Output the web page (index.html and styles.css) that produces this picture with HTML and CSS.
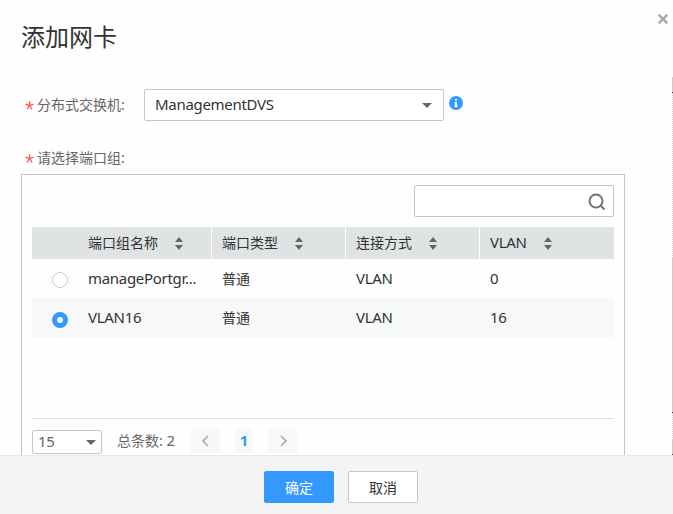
FILE: index.html
```html
<!DOCTYPE html>
<html lang="zh-CN">
<head>
<meta charset="utf-8">
<title>添加网卡</title>
<link rel="stylesheet" href="styles.css">
</head>
<body>
<div class="dialog">
  <main class="content">
    <header class="head">
      <h1>添加网卡</h1>
      <svg class="close" width="10" height="10" viewBox="0 0 10 10"><path d="M.6 .6L9.4 9.4M9.4 .6L.6 9.4"/></svg>
    </header>
    <div class="field">
      <span class="star"><svg width="9" height="9" viewBox="0 0 9 9"><path d="M4.5 0.2V4.7M0.4 3.2L4.5 4.7L8.6 3.2M2 8.4L4.5 4.7L7 8.4"/></svg></span>
      <label>分布式交换机:</label>
      <div class="select"><span class="latin">ManagementDVS</span><svg width="10" height="5" viewBox="0 0 10 5"><path d="M0 0H10L5 5Z"/></svg></div>
      <svg class="info" width="14" height="14" viewBox="0 0 14 14"><circle cx="7" cy="7" r="7"/><path d="M6 3h2v1.6H6zM5.4 6H8v4h.8v1H5.3v-1H6V7h-.6z"/></svg>
    </div>
    <div class="field group">
      <span class="star"><svg width="9" height="9" viewBox="0 0 9 9"><path d="M4.5 0.2V4.7M0.4 3.2L4.5 4.7L8.6 3.2M2 8.4L4.5 4.7L7 8.4"/></svg></span>
      <label>请选择端口组:</label>
    </div>
    <section class="panel">
      <div class="search"><svg width="18" height="18" viewBox="0 0 18 18"><circle cx="8" cy="8" r="6.5"/><path d="M12.5 12.5L16.5 16.5"/></svg></div>
      <div class="grid">
        <div class="row header">
          <div class="cell name">端口组名称<svg class="sort" width="8" height="13" viewBox="0 0 8 13"><path d="M0 5H8L4 0ZM0 8H8L4 13Z"/></svg></div>
          <div class="cell">端口类型<svg class="sort" width="8" height="13" viewBox="0 0 8 13"><path d="M0 5H8L4 0ZM0 8H8L4 13Z"/></svg></div>
          <div class="cell">连接方式<svg class="sort" width="8" height="13" viewBox="0 0 8 13"><path d="M0 5H8L4 0ZM0 8H8L4 13Z"/></svg></div>
          <div class="cell"><span class="latin">VLAN</span><svg class="sort" width="8" height="13" viewBox="0 0 8 13"><path d="M0 5H8L4 0ZM0 8H8L4 13Z"/></svg></div>
        </div>
        <div class="row">
          <div class="cell name"><span class="radio"></span><span class="latin">managePortgr...</span></div>
          <div class="cell">普通</div>
          <div class="cell"><span class="latin">VLAN</span></div>
          <div class="cell"><span class="latin">0</span></div>
        </div>
        <div class="row alt">
          <div class="cell name"><span class="radio on"></span><span class="latin">VLAN16</span></div>
          <div class="cell">普通</div>
          <div class="cell"><span class="latin">VLAN</span></div>
          <div class="cell"><span class="latin">16</span></div>
        </div>
      </div>
      <div class="pager">
        <div class="size"><span class="latin">15</span><svg width="10" height="5" viewBox="0 0 10 5"><path d="M0 0H10L5 5Z"/></svg></div>
        <span class="total">总条数: <span class="count">2</span></span>
        <span class="step"><svg width="7" height="12" viewBox="0 0 7 12"><path d="M6 1L1 6L6 11"/></svg></span>
        <span class="page">1</span>
        <span class="step"><svg width="7" height="12" viewBox="0 0 7 12"><path d="M1 1L6 6L1 11"/></svg></span>
      </div>
    </section>
    <div class="edge"><i class="solid first"></i><i class="dots upper"></i><i class="solid middle"></i><i class="dots lower"></i><i class="solid last"></i></div>
  </main>
  <footer class="footer">
    <button class="primary">确定</button>
    <button>取消</button>
  </footer>
</div>
</body>
</html>
```
FILE: styles.css
```css
* { box-sizing: border-box; }
body {
  margin: 0;
  font: 14px/20px "Noto Sans", "Noto Sans CJK SC", sans-serif;
  color: #333;
  background: #fefefe;
}
svg { display: block; flex: none; fill: #666; }
.dialog { width: 673px; height: 514px; overflow: hidden; display: flex; flex-direction: column; }
.content { position: relative; height: 455px; overflow: hidden; flex: none; padding-left: 21px; }
.head { height: 89px; display: flex; justify-content: space-between; padding: 14px 5px 0 0; }
h1 { margin: 6px 0 0; font-size: 24px; line-height: 34px; font-weight: 400; }
.close { fill: none; stroke: #aaa; stroke-width: 2.5; }
.field { display: flex; align-items: center; height: 32px; color: #666; }
.star { width: 16px; padding: 0 0 0 3.5px; }
.star svg { fill: none; stroke: #f66060; stroke-width: 1.4; }
.field label { width: 107px; white-space: nowrap; }
.latin { font-size: 15px; letter-spacing: -0.3px; padding-bottom: 2px; }
.count { font-size: 15px; }
.select {
  width: 300px; height: 32px; border: 1px solid #c6c6c6; border-radius: 2px;
  display: flex; align-items: center; justify-content: space-between;
  padding: 0 11px 0 10px; color: #333; background: #fff;
}
.info { margin: -4px 0 0 5px; fill: #39f; }
.info path { fill: #fff; }
.group { height: 20px; margin-top: 27px; }
.panel { width: 604px; height: 300px; margin-top: 6px; border: 1px solid #c6c6c6; padding: 10px; }
.search {
  width: 200px; height: 32px; margin: 0 0 10px auto; border: 1px solid #c6c6c6; border-radius: 2px;
  display: flex; align-items: center; justify-content: flex-end; padding: 1px 7px 0 0; background: #fff;
}
.search svg { fill: none; stroke: #737373; stroke-width: 2; }
.grid { height: 192px; border-bottom: 1px solid #dfdfdf; }
.row { display: grid; grid-template-columns: 180px 134px 134px 134px; height: 39px; }
.header { height: 32px; }
.alt { height: 40px; background: #f7f9f8; }
.cell { display: flex; align-items: center; padding-left: 10px; white-space: nowrap; }
.header .cell { background: #dfe3e3; border-right: 1px solid #fff; }
.header .cell:last-child { border-right: 0; }
.name { padding-left: 20px; }
.header .name { padding-left: 56px; }
.sort { margin-left: 17px; }
.radio { width: 16px; height: 16px; margin: 3px 20px 0 0; border: 1px solid #ccc; border-radius: 50%; background: #fff; }
.radio.on { border: 5px solid #39f; margin-top: 4px; }
.pager { display: flex; align-items: flex-start; padding-top: 10px; color: #666; }
.size {
  width: 70px; height: 24px; margin: 1px 15px 0 0; border: 1px solid #c6c6c6; border-radius: 2px;
  display: flex; align-items: center; justify-content: space-between; padding: 0 5px; background: #fff;
}
.total { width: 73px; line-height: 22px; white-space: nowrap; }
.step { width: 30px; height: 24px; display: flex; align-items: center; justify-content: center; background: #f7f9f8; }
.step svg { fill: none; stroke: #aaa; stroke-width: 1.6; }
.page { width: 18px; height: 24px; margin: 0 15px; font-size: 15px; line-height: 22px; text-align: center; font-weight: 700; color: #39f; background: #f7f9f8; }
.footer {
  height: 59px; display: flex; justify-content: center; align-items: flex-start; gap: 14px;
  padding: 15px 0 0 9px; border-top: 1px solid #e9e9e9; background: #f4f4f4;
}
button { width: 70px; height: 32px; padding: 2px 0 0; border: 1px solid #c6c6c6; border-radius: 2px; background: #fff; color: #333; font: inherit; }
.primary { border-color: #39f; background: #39f; color: #fff; }
.edge { position: absolute; top: 77px; right: 0; width: 1px; }
.edge i { display: block; }
.solid { background: #d0cdc4; border-bottom: 1px solid #444; }
.dots { background: repeating-linear-gradient(#ccc 0 1px, #fefefe 1px 2px); }
.first { height: 16px; }
.upper { height: 164px; }
.middle { height: 156px; }
.lower { height: 26px; }
.last { height: 16px; }
```
